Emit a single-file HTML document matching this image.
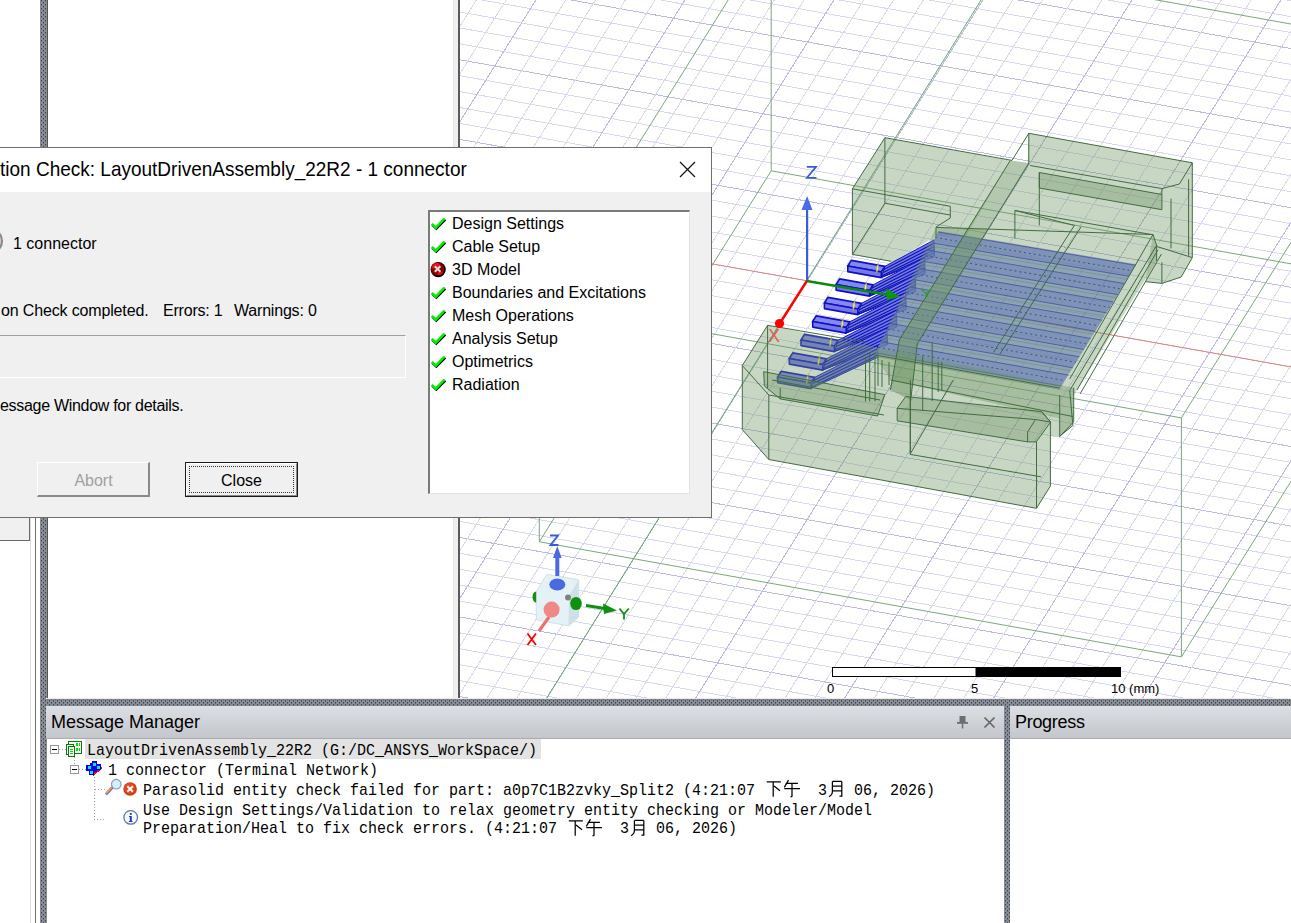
<!DOCTYPE html>
<html><head><meta charset="utf-8">
<style>
html,body{margin:0;padding:0;width:1291px;height:923px;overflow:hidden;background:#fff;position:relative;font-family:"Liberation Sans",sans-serif;}
.abs{position:absolute;}
.splv{position:absolute;background-color:#8e8e8e;background-image:radial-gradient(circle at 1px 1px, #234478 0.6px, transparent 1.1px),radial-gradient(circle at 3px 3px, #234478 0.6px, transparent 1.1px);background-size:4px 4px;}
.t{position:absolute;white-space:pre;line-height:1;}
.mono{font-family:"Liberation Mono",monospace;transform:scaleY(1.13);transform-origin:0 11.5px;}
</style></head><body>
<!-- left lines below dialog -->
<div class="abs" style="left:30px;top:517px;width:1px;height:406px;background:#dcdcdc"></div>
<div class="abs" style="left:35px;top:517px;width:1px;height:406px;background:#6e6e6e"></div>
<div class="abs" style="left:0;top:517px;width:29px;height:23px;background:#f0f0f0;border-right:1px solid #6a6a6a;border-bottom:1px solid #6a6a6a"></div>
<!-- vertical splitter left -->
<svg class="abs" style="left:0;top:0" width="1291" height="923"><defs><pattern id="dots" x="0" y="0" width="4" height="4" patternUnits="userSpaceOnUse"><rect width="4" height="4" fill="#8c8c8c"/><rect x="1" y="0" width="1" height="1" fill="#2a4676"/><rect x="1" y="1" width="1" height="1" fill="#5a6a84"/><rect x="3" y="2" width="1" height="1" fill="#2a4676"/><rect x="3" y="3" width="1" height="1" fill="#5a6a84"/></pattern></defs><g shape-rendering="crispEdges"><rect x="40" y="0" width="7" height="923" fill="url(#dots)"/><rect x="40" y="699" width="1251" height="7" fill="url(#dots)"/><rect x="1004" y="706" width="6" height="217" fill="url(#dots)"/></g></svg>
<div class="abs" style="left:47px;top:0;width:1px;height:699px;background:#555"></div>
<!-- viewport border -->
<div class="abs" style="left:453px;top:0;width:1px;height:699px;background:#e4e4e4"></div>
<div class="abs" style="left:454px;top:0;width:4px;height:699px;background:#f0f0f0"></div>
<div class="abs" style="left:458px;top:0;width:2px;height:699px;background:#5a5a5a"></div>
<!-- viewport -->
<svg class="abs" style="left:0;top:0" width="1291" height="923">
<defs><clipPath id="vp"><rect x="460" y="0" width="831" height="699"/></clipPath></defs>
<g clip-path="url(#vp)" shape-rendering="crispEdges" stroke-width="1">
<line x1="460" y1="-147.16" x2="1291" y2="0.76" stroke="#d8d8ee"/>
<line x1="460" y1="-131.24" x2="1291" y2="16.68" stroke="#d8d8ee"/>
<line x1="460" y1="-115.32" x2="1291" y2="32.60" stroke="#d8d8ee"/>
<line x1="460" y1="-99.40" x2="1291" y2="48.52" stroke="#bcbce0"/>
<line x1="460" y1="-83.48" x2="1291" y2="64.44" stroke="#d8d8ee"/>
<line x1="460" y1="-67.56" x2="1291" y2="80.36" stroke="#d8d8ee"/>
<line x1="460" y1="-51.64" x2="1291" y2="96.28" stroke="#d8d8ee"/>
<line x1="460" y1="-35.72" x2="1291" y2="112.20" stroke="#d8d8ee"/>
<line x1="460" y1="-19.80" x2="1291" y2="128.12" stroke="#bcbce0"/>
<line x1="460" y1="-3.88" x2="1291" y2="144.04" stroke="#d8d8ee"/>
<line x1="460" y1="12.04" x2="1291" y2="159.96" stroke="#d8d8ee"/>
<line x1="460" y1="27.96" x2="1291" y2="175.88" stroke="#d8d8ee"/>
<line x1="460" y1="43.88" x2="1291" y2="191.80" stroke="#d8d8ee"/>
<line x1="460" y1="59.80" x2="1291" y2="207.72" stroke="#bcbce0"/>
<line x1="460" y1="75.72" x2="1291" y2="223.64" stroke="#d8d8ee"/>
<line x1="460" y1="91.64" x2="1291" y2="239.56" stroke="#d8d8ee"/>
<line x1="460" y1="107.56" x2="1291" y2="255.48" stroke="#d8d8ee"/>
<line x1="460" y1="123.48" x2="1291" y2="271.40" stroke="#d8d8ee"/>
<line x1="460" y1="139.40" x2="1291" y2="287.32" stroke="#bcbce0"/>
<line x1="460" y1="155.32" x2="1291" y2="303.24" stroke="#d8d8ee"/>
<line x1="460" y1="171.24" x2="1291" y2="319.16" stroke="#d8d8ee"/>
<line x1="460" y1="187.16" x2="1291" y2="335.08" stroke="#d8d8ee"/>
<line x1="460" y1="203.08" x2="1291" y2="351.00" stroke="#d8d8ee"/>
<line x1="460" y1="219.00" x2="1291" y2="366.92" stroke="#bcbce0"/>
<line x1="460" y1="234.92" x2="1291" y2="382.84" stroke="#d8d8ee"/>
<line x1="460" y1="250.84" x2="1291" y2="398.76" stroke="#d8d8ee"/>
<line x1="460" y1="266.76" x2="1291" y2="414.68" stroke="#d8d8ee"/>
<line x1="460" y1="282.68" x2="1291" y2="430.60" stroke="#d8d8ee"/>
<line x1="460" y1="298.60" x2="1291" y2="446.52" stroke="#bcbce0"/>
<line x1="460" y1="314.52" x2="1291" y2="462.44" stroke="#d8d8ee"/>
<line x1="460" y1="330.44" x2="1291" y2="478.36" stroke="#d8d8ee"/>
<line x1="460" y1="346.36" x2="1291" y2="494.28" stroke="#d8d8ee"/>
<line x1="460" y1="362.28" x2="1291" y2="510.20" stroke="#d8d8ee"/>
<line x1="460" y1="378.20" x2="1291" y2="526.12" stroke="#bcbce0"/>
<line x1="460" y1="394.12" x2="1291" y2="542.04" stroke="#d8d8ee"/>
<line x1="460" y1="410.04" x2="1291" y2="557.96" stroke="#d8d8ee"/>
<line x1="460" y1="425.96" x2="1291" y2="573.88" stroke="#d8d8ee"/>
<line x1="460" y1="441.88" x2="1291" y2="589.80" stroke="#d8d8ee"/>
<line x1="460" y1="457.80" x2="1291" y2="605.72" stroke="#bcbce0"/>
<line x1="460" y1="473.72" x2="1291" y2="621.64" stroke="#d8d8ee"/>
<line x1="460" y1="489.64" x2="1291" y2="637.56" stroke="#d8d8ee"/>
<line x1="460" y1="505.56" x2="1291" y2="653.48" stroke="#d8d8ee"/>
<line x1="460" y1="521.48" x2="1291" y2="669.40" stroke="#d8d8ee"/>
<line x1="460" y1="537.40" x2="1291" y2="685.32" stroke="#bcbce0"/>
<line x1="460" y1="553.32" x2="1291" y2="701.24" stroke="#d8d8ee"/>
<line x1="460" y1="569.24" x2="1291" y2="717.16" stroke="#d8d8ee"/>
<line x1="460" y1="585.16" x2="1291" y2="733.08" stroke="#d8d8ee"/>
<line x1="460" y1="601.08" x2="1291" y2="749.00" stroke="#d8d8ee"/>
<line x1="460" y1="617.00" x2="1291" y2="764.92" stroke="#bcbce0"/>
<line x1="460" y1="632.92" x2="1291" y2="780.84" stroke="#d8d8ee"/>
<line x1="460" y1="648.84" x2="1291" y2="796.76" stroke="#d8d8ee"/>
<line x1="460" y1="664.76" x2="1291" y2="812.68" stroke="#d8d8ee"/>
<line x1="460" y1="680.68" x2="1291" y2="828.60" stroke="#d8d8ee"/>
<line x1="460" y1="696.60" x2="1291" y2="844.52" stroke="#bcbce0"/>
<line x1="476.30" y1="0" x2="39.42" y2="699" stroke="#d8d8ee"/>
<line x1="506.10" y1="0" x2="69.22" y2="699" stroke="#d8d8ee"/>
<line x1="535.90" y1="0" x2="99.02" y2="699" stroke="#bcbce0"/>
<line x1="565.70" y1="0" x2="128.82" y2="699" stroke="#d8d8ee"/>
<line x1="595.50" y1="0" x2="158.62" y2="699" stroke="#d8d8ee"/>
<line x1="625.30" y1="0" x2="188.42" y2="699" stroke="#d8d8ee"/>
<line x1="655.10" y1="0" x2="218.23" y2="699" stroke="#d8d8ee"/>
<line x1="684.90" y1="0" x2="248.02" y2="699" stroke="#bcbce0"/>
<line x1="714.70" y1="0" x2="277.83" y2="699" stroke="#d8d8ee"/>
<line x1="744.50" y1="0" x2="307.62" y2="699" stroke="#d8d8ee"/>
<line x1="774.30" y1="0" x2="337.42" y2="699" stroke="#d8d8ee"/>
<line x1="804.10" y1="0" x2="367.22" y2="699" stroke="#d8d8ee"/>
<line x1="833.90" y1="0" x2="397.02" y2="699" stroke="#bcbce0"/>
<line x1="863.70" y1="0" x2="426.83" y2="699" stroke="#d8d8ee"/>
<line x1="893.50" y1="0" x2="456.62" y2="699" stroke="#d8d8ee"/>
<line x1="923.30" y1="0" x2="486.42" y2="699" stroke="#d8d8ee"/>
<line x1="953.10" y1="0" x2="516.22" y2="699" stroke="#d8d8ee"/>
<line x1="982.90" y1="0" x2="546.02" y2="699" stroke="#bcbce0"/>
<line x1="1012.70" y1="0" x2="575.83" y2="699" stroke="#d8d8ee"/>
<line x1="1042.50" y1="0" x2="605.62" y2="699" stroke="#d8d8ee"/>
<line x1="1072.30" y1="0" x2="635.42" y2="699" stroke="#d8d8ee"/>
<line x1="1102.10" y1="0" x2="665.22" y2="699" stroke="#d8d8ee"/>
<line x1="1131.90" y1="0" x2="695.03" y2="699" stroke="#bcbce0"/>
<line x1="1161.70" y1="0" x2="724.83" y2="699" stroke="#d8d8ee"/>
<line x1="1191.50" y1="0" x2="754.62" y2="699" stroke="#d8d8ee"/>
<line x1="1221.30" y1="0" x2="784.42" y2="699" stroke="#d8d8ee"/>
<line x1="1251.10" y1="0" x2="814.22" y2="699" stroke="#d8d8ee"/>
<line x1="1280.90" y1="0" x2="844.03" y2="699" stroke="#bcbce0"/>
<line x1="1310.70" y1="0" x2="873.83" y2="699" stroke="#d8d8ee"/>
<line x1="1340.50" y1="0" x2="903.62" y2="699" stroke="#d8d8ee"/>
<line x1="1370.30" y1="0" x2="933.42" y2="699" stroke="#d8d8ee"/>
<line x1="1400.10" y1="0" x2="963.22" y2="699" stroke="#d8d8ee"/>
<line x1="1429.90" y1="0" x2="993.03" y2="699" stroke="#bcbce0"/>
<line x1="1459.70" y1="0" x2="1022.83" y2="699" stroke="#d8d8ee"/>
<line x1="1489.50" y1="0" x2="1052.62" y2="699" stroke="#d8d8ee"/>
<line x1="1519.30" y1="0" x2="1082.42" y2="699" stroke="#d8d8ee"/>
<line x1="1549.10" y1="0" x2="1112.22" y2="699" stroke="#d8d8ee"/>
<line x1="1578.90" y1="0" x2="1142.03" y2="699" stroke="#bcbce0"/>
<line x1="1608.70" y1="0" x2="1171.82" y2="699" stroke="#d8d8ee"/>
<line x1="1638.50" y1="0" x2="1201.62" y2="699" stroke="#d8d8ee"/>
<line x1="1668.30" y1="0" x2="1231.43" y2="699" stroke="#d8d8ee"/>
<line x1="1698.10" y1="0" x2="1261.22" y2="699" stroke="#d8d8ee"/>
<line x1="1727.90" y1="0" x2="1291.03" y2="699" stroke="#bcbce0"/>
</g>
<g clip-path="url(#vp)">
<polyline points="539.3,541.8 1181.4,656.9" fill="none" stroke="#7aa87a" stroke-width="1" />
<polyline points="539.3,541.8 771.2,170.8" fill="none" stroke="#7aa87a" stroke-width="1" />
<polyline points="771.2,170.8 1371.2,278.2" fill="none" stroke="#7aa87a" stroke-width="1" />
<polyline points="1181.4,656.9 1431.0,256.9" fill="none" stroke="#7aa87a" stroke-width="1" />
<polyline points="539.3,302.8 1181.4,417.9" fill="none" stroke="#7aa87a" stroke-width="1" />
<polyline points="539.3,302.8 771.2,-69.0" fill="none" stroke="#7aa87a" stroke-width="1" />
<polyline points="1181.4,417.9 1431.0,17.9" fill="none" stroke="#7aa87a" stroke-width="1" />
<polyline points="771.2,-69.0 1471.2,56.3" fill="none" stroke="#7aa87a" stroke-width="1" />
<polyline points="539.3,541.8 539.3,302.8" fill="none" stroke="#7aa87a" stroke-width="1" />
<polyline points="1181.4,656.9 1181.4,417.9" fill="none" stroke="#7aa87a" stroke-width="1" />
<polyline points="771.2,170.8 771.2,-69.0" fill="none" stroke="#7aa87a" stroke-width="1" />
<polyline points="460.0,219.0 1291.0,366.9" fill="none" stroke="#e08a80" stroke-width="1" />
<polyline points="981.1,0.0 546.3,699.0" fill="none" stroke="#6aa86a" stroke-width="1" />
<polygon points="884.9,137.7 1010.3,160.4 966.0,236.0 936.0,236.5 893.0,262.0 852.4,254.4 852.4,188.8" fill="rgba(110,150,100,0.38)" stroke="none" stroke-width="1" />
<polygon points="1028.8,133.3 1192.3,162.8 1192.3,257.6 1181.2,277.0 1161.9,283.4 1145.3,281.6 1153.0,234.5 988.8,229.0 1027.7,163.0" fill="rgba(110,150,100,0.38)" stroke="none" stroke-width="1" />
<polygon points="1039.3,172.5 1161.9,194.5 1161.9,209.7 1039.3,188.0" fill="rgba(110,150,100,0.38)" stroke="none" stroke-width="1" />
<polygon points="884.8,266.4 934.0,240.0 934.5,256.5 881.3,277.6" fill="#7478ea" stroke="#1010c0" stroke-width="1" />
<polyline points="883.8,269.6 934.1,243.2" fill="none" stroke="#0a12a8" stroke-width="1.1" />
<polyline points="882.8,272.8 934.2,246.4" fill="none" stroke="#0a12a8" stroke-width="1.1" />
<polyline points="881.8,276.0 934.3,249.6" fill="none" stroke="#0a12a8" stroke-width="1.1" />
<polyline points="881.3,277.6 934.4,252.8" fill="none" stroke="#0a12a8" stroke-width="1.1" />
<polygon points="873.1,284.9 924.6,257.6 925.1,274.1 869.6,296.1" fill="#7478ea" stroke="#1010c0" stroke-width="1" />
<polyline points="872.1,288.1 924.7,260.8" fill="none" stroke="#0a12a8" stroke-width="1.1" />
<polyline points="871.1,291.3 924.8,264.0" fill="none" stroke="#0a12a8" stroke-width="1.1" />
<polyline points="870.1,294.5 924.9,267.2" fill="none" stroke="#0a12a8" stroke-width="1.1" />
<polyline points="869.6,296.1 925.0,270.4" fill="none" stroke="#0a12a8" stroke-width="1.1" />
<polygon points="861.4,303.4 915.2,275.2 915.7,291.7 857.9,314.6" fill="#7478ea" stroke="#1010c0" stroke-width="1" />
<polyline points="860.4,306.6 915.3,278.4" fill="none" stroke="#0a12a8" stroke-width="1.1" />
<polyline points="859.4,309.8 915.4,281.6" fill="none" stroke="#0a12a8" stroke-width="1.1" />
<polyline points="858.4,313.0 915.5,284.8" fill="none" stroke="#0a12a8" stroke-width="1.1" />
<polyline points="857.9,314.6 915.6,288.0" fill="none" stroke="#0a12a8" stroke-width="1.1" />
<polygon points="849.7,321.9 905.8,292.8 906.3,309.3 846.2,333.1" fill="#7478ea" stroke="#1010c0" stroke-width="1" />
<polyline points="848.7,325.1 905.9,296.0" fill="none" stroke="#0a12a8" stroke-width="1.1" />
<polyline points="847.7,328.3 906.0,299.2" fill="none" stroke="#0a12a8" stroke-width="1.1" />
<polyline points="846.7,331.5 906.1,302.4" fill="none" stroke="#0a12a8" stroke-width="1.1" />
<polyline points="846.2,333.1 906.2,305.6" fill="none" stroke="#0a12a8" stroke-width="1.1" />
<polygon points="838.0,340.4 896.4,310.4 896.9,326.9 834.5,351.6" fill="#7478ea" stroke="#1010c0" stroke-width="1" />
<polyline points="837.0,343.6 896.5,313.6" fill="none" stroke="#0a12a8" stroke-width="1.1" />
<polyline points="836.0,346.8 896.6,316.8" fill="none" stroke="#0a12a8" stroke-width="1.1" />
<polyline points="835.0,350.0 896.7,320.0" fill="none" stroke="#0a12a8" stroke-width="1.1" />
<polyline points="834.5,351.6 896.8,323.2" fill="none" stroke="#0a12a8" stroke-width="1.1" />
<polygon points="826.3,358.9 887.0,328.0 887.5,344.5 822.8,370.1" fill="#7478ea" stroke="#1010c0" stroke-width="1" />
<polyline points="825.3,362.1 887.1,331.2" fill="none" stroke="#0a12a8" stroke-width="1.1" />
<polyline points="824.3,365.3 887.2,334.4" fill="none" stroke="#0a12a8" stroke-width="1.1" />
<polyline points="823.3,368.5 887.3,337.6" fill="none" stroke="#0a12a8" stroke-width="1.1" />
<polyline points="822.8,370.1 887.4,340.8" fill="none" stroke="#0a12a8" stroke-width="1.1" />
<polygon points="814.6,377.4 877.6,345.6 878.1,357.1 811.1,388.6" fill="#7478ea" stroke="#1010c0" stroke-width="1" />
<polyline points="813.6,380.6 877.7,348.8" fill="none" stroke="#0a12a8" stroke-width="1.1" />
<polyline points="812.6,383.8 877.9,352.0" fill="none" stroke="#0a12a8" stroke-width="1.1" />
<polyline points="811.6,387.0 878.0,355.2" fill="none" stroke="#0a12a8" stroke-width="1.1" />
<polygon points="851.3,260.4 884.8,266.4 881.3,272.0 847.8,266.0" fill="#8488f2" stroke="#1010c0" stroke-width="1.6" stroke-linejoin="round"/>
<polygon points="847.8,266.0 881.3,272.0 881.3,277.6 847.8,271.6" fill="#7478ea" stroke="#1010c0" stroke-width="1.6" stroke-linejoin="round"/>
<path d="M878.3 263.4 l-2 4 v6 l2 -4 z" fill="#f0f0a0" stroke="#a0a040" stroke-width="0.6"/>
<polygon points="839.6,278.9 873.1,284.9 869.6,290.5 836.1,284.5" fill="#8488f2" stroke="#1010c0" stroke-width="1.6" stroke-linejoin="round"/>
<polygon points="836.1,284.5 869.6,290.5 869.6,296.1 836.1,290.1" fill="#7478ea" stroke="#1010c0" stroke-width="1.6" stroke-linejoin="round"/>
<path d="M866.6 281.9 l-2 4 v6 l2 -4 z" fill="#f0f0a0" stroke="#a0a040" stroke-width="0.6"/>
<polygon points="827.9,297.4 861.4,303.4 857.9,309.0 824.4,303.0" fill="#8488f2" stroke="#1010c0" stroke-width="1.6" stroke-linejoin="round"/>
<polygon points="824.4,303.0 857.9,309.0 857.9,314.6 824.4,308.6" fill="#7478ea" stroke="#1010c0" stroke-width="1.6" stroke-linejoin="round"/>
<path d="M854.9 300.4 l-2 4 v6 l2 -4 z" fill="#f0f0a0" stroke="#a0a040" stroke-width="0.6"/>
<polygon points="816.2,315.9 849.7,321.9 846.2,327.5 812.7,321.5" fill="#8488f2" stroke="#1010c0" stroke-width="1.6" stroke-linejoin="round"/>
<polygon points="812.7,321.5 846.2,327.5 846.2,333.1 812.7,327.1" fill="#7478ea" stroke="#1010c0" stroke-width="1.6" stroke-linejoin="round"/>
<path d="M843.2 318.9 l-2 4 v6 l2 -4 z" fill="#f0f0a0" stroke="#a0a040" stroke-width="0.6"/>
<polygon points="804.5,334.4 838.0,340.4 834.5,346.0 801.0,340.0" fill="#8488f2" stroke="#1010c0" stroke-width="1.6" stroke-linejoin="round"/>
<polygon points="801.0,340.0 834.5,346.0 834.5,351.6 801.0,345.6" fill="#7478ea" stroke="#1010c0" stroke-width="1.6" stroke-linejoin="round"/>
<path d="M831.5 337.4 l-2 4 v6 l2 -4 z" fill="#f0f0a0" stroke="#a0a040" stroke-width="0.6"/>
<polygon points="792.8,352.9 826.3,358.9 822.8,364.5 789.3,358.5" fill="#8488f2" stroke="#1010c0" stroke-width="1.6" stroke-linejoin="round"/>
<polygon points="789.3,358.5 822.8,364.5 822.8,370.1 789.3,364.1" fill="#7478ea" stroke="#1010c0" stroke-width="1.6" stroke-linejoin="round"/>
<path d="M819.8 355.9 l-2 4 v6 l2 -4 z" fill="#f0f0a0" stroke="#a0a040" stroke-width="0.6"/>
<polygon points="781.1,371.4 814.6,377.4 811.1,383.0 777.6,377.0" fill="#8488f2" stroke="#1010c0" stroke-width="1.6" stroke-linejoin="round"/>
<polygon points="777.6,377.0 811.1,383.0 811.1,388.6 777.6,382.6" fill="#7478ea" stroke="#1010c0" stroke-width="1.6" stroke-linejoin="round"/>
<path d="M808.1 374.4 l-2 4 v6 l2 -4 z" fill="#f0f0a0" stroke="#a0a040" stroke-width="0.6"/>
<polygon points="938.6,231.0 1136.4,264.3 1060.1,388.2 874.3,354.9" fill="rgba(95,110,215,0.58)" stroke="none" stroke-width="1" />
<polygon points="938.1,232.0 1135.8,265.3 1129.0,276.3 932.4,243.0" fill="rgba(100,110,240,0.4)" stroke="none" stroke-width="1" />
<polyline points="938.1,232.0 1135.8,265.3" fill="none" stroke="#3038c0" stroke-width="0.9" />
<polyline points="932.4,243.0 1129.0,276.3" fill="none" stroke="#3038c0" stroke-width="0.9" />
<polyline points="935.2,237.5 1132.4,270.8" fill="none" stroke="#1820a0" stroke-width="0.9" stroke-dasharray="2,3"/>
<polyline points="930.8,246.0 1127.2,279.3" fill="none" stroke="rgba(90,130,90,0.45)" stroke-width="1.0" />
<polygon points="928.6,250.3 1124.5,283.6 1117.7,294.6 922.9,261.3" fill="rgba(100,110,240,0.4)" stroke="none" stroke-width="1" />
<polyline points="928.6,250.3 1124.5,283.6" fill="none" stroke="#3038c0" stroke-width="0.9" />
<polyline points="922.9,261.3 1117.7,294.6" fill="none" stroke="#3038c0" stroke-width="0.9" />
<polyline points="925.7,255.8 1121.1,289.1" fill="none" stroke="#1820a0" stroke-width="0.9" stroke-dasharray="2,3"/>
<polyline points="921.3,264.3 1115.9,297.6" fill="none" stroke="rgba(90,130,90,0.45)" stroke-width="1.0" />
<polygon points="919.1,268.6 1113.2,301.9 1106.5,312.9 913.4,279.6" fill="rgba(100,110,240,0.4)" stroke="none" stroke-width="1" />
<polyline points="919.1,268.6 1113.2,301.9" fill="none" stroke="#3038c0" stroke-width="0.9" />
<polyline points="913.4,279.6 1106.5,312.9" fill="none" stroke="#3038c0" stroke-width="0.9" />
<polyline points="916.2,274.1 1109.9,307.4" fill="none" stroke="#1820a0" stroke-width="0.9" stroke-dasharray="2,3"/>
<polyline points="911.8,282.6 1104.6,315.9" fill="none" stroke="rgba(90,130,90,0.45)" stroke-width="1.0" />
<polygon points="909.6,286.9 1102.0,320.2 1095.2,331.2 903.9,297.9" fill="rgba(100,110,240,0.4)" stroke="none" stroke-width="1" />
<polyline points="909.6,286.9 1102.0,320.2" fill="none" stroke="#3038c0" stroke-width="0.9" />
<polyline points="903.9,297.9 1095.2,331.2" fill="none" stroke="#3038c0" stroke-width="0.9" />
<polyline points="906.7,292.4 1098.6,325.7" fill="none" stroke="#1820a0" stroke-width="0.9" stroke-dasharray="2,3"/>
<polyline points="902.3,300.9 1093.4,334.2" fill="none" stroke="rgba(90,130,90,0.45)" stroke-width="1.0" />
<polygon points="900.1,305.2 1090.7,338.5 1083.9,349.5 894.4,316.2" fill="rgba(100,110,240,0.4)" stroke="none" stroke-width="1" />
<polyline points="900.1,305.2 1090.7,338.5" fill="none" stroke="#3038c0" stroke-width="0.9" />
<polyline points="894.4,316.2 1083.9,349.5" fill="none" stroke="#3038c0" stroke-width="0.9" />
<polyline points="897.2,310.7 1087.3,344.0" fill="none" stroke="#1820a0" stroke-width="0.9" stroke-dasharray="2,3"/>
<polyline points="892.8,319.2 1082.1,352.5" fill="none" stroke="rgba(90,130,90,0.45)" stroke-width="1.0" />
<polygon points="890.6,323.5 1079.4,356.8 1072.7,367.8 884.9,334.5" fill="rgba(100,110,240,0.4)" stroke="none" stroke-width="1" />
<polyline points="890.6,323.5 1079.4,356.8" fill="none" stroke="#3038c0" stroke-width="0.9" />
<polyline points="884.9,334.5 1072.7,367.8" fill="none" stroke="#3038c0" stroke-width="0.9" />
<polyline points="887.7,329.0 1076.0,362.3" fill="none" stroke="#1820a0" stroke-width="0.9" stroke-dasharray="2,3"/>
<polyline points="883.3,337.5 1070.8,370.8" fill="none" stroke="rgba(90,130,90,0.45)" stroke-width="1.0" />
<polygon points="881.1,341.8 1068.2,375.1 1061.4,386.1 875.4,352.8" fill="rgba(100,110,240,0.4)" stroke="none" stroke-width="1" />
<polyline points="881.1,341.8 1068.2,375.1" fill="none" stroke="#3038c0" stroke-width="0.9" />
<polyline points="875.4,352.8 1061.4,386.1" fill="none" stroke="#3038c0" stroke-width="0.9" />
<polyline points="878.2,347.3 1064.8,380.6" fill="none" stroke="#1820a0" stroke-width="0.9" stroke-dasharray="2,3"/>
<polyline points="873.8,355.8 1059.5,389.1" fill="none" stroke="rgba(90,130,90,0.45)" stroke-width="1.0" />
<polygon points="936.2,227.4 1153.0,234.5 1156.6,245.3 1156.6,261.0 1072.9,396.9 1072.9,425.5 1059.8,436.2 1059.8,418.5 890.5,380.0 874.3,354.9" fill="rgba(110,150,100,0.38)" stroke="none" stroke-width="1" />
<polygon points="767.6,325.3 1073.7,387.7 1073.7,421.8 1059.7,436.5 1050.4,436.0 1050.4,486.1 1036.5,508.3 768.8,459.5 742.3,429.6 742.3,365.5" fill="rgba(110,150,100,0.38)" stroke="none" stroke-width="1" />
<polygon points="763.7,371.7 884.8,394.6 877.6,416.0 780.2,398.9 764.4,386.0" fill="rgba(110,150,100,0.38)" stroke="none" stroke-width="1" />
<polygon points="905.8,396.5 1041.4,411.6 1050.7,422.1 1036.2,441.9 1027.6,441.9 897.2,420.8 897.2,408.3" fill="rgba(110,150,100,0.38)" stroke="none" stroke-width="1" />
<polygon points="1010.3,160.4 1029.0,163.0 917.4,343.6 910.7,400.0 890.4,390.0 899.3,340.0" fill="rgba(110,150,100,0.52)" stroke="none" stroke-width="1" />
<polyline points="852.4,188.8 884.9,137.7 1012.0,160.4" fill="none" stroke="#416c41" stroke-width="1" />
<polyline points="852.4,188.8 852.4,254.4 891.0,261.3" fill="none" stroke="#416c41" stroke-width="1" />
<polyline points="852.4,188.8 950.3,206.3 950.3,218.0 936.0,227.2 936.0,236.5" fill="none" stroke="#416c41" stroke-width="1" />
<polyline points="884.9,137.7 884.9,203.2 852.4,254.4" fill="none" stroke="#416c41" stroke-width="1" />
<polyline points="884.9,203.2 950.0,215.0" fill="none" stroke="#416c41" stroke-width="1" />
<polyline points="1028.8,133.3 1192.3,162.8 1192.3,257.6 1181.2,277.0 1161.9,283.4 1145.3,281.6" fill="none" stroke="#416c41" stroke-width="1" />
<polyline points="1028.8,133.3 1028.8,163.0" fill="none" stroke="#416c41" stroke-width="1" />
<polyline points="1030.1,165.5 1161.9,188.6 1179.4,184.0 1192.3,162.8" fill="none" stroke="#416c41" stroke-width="1" />
<polyline points="1161.9,188.6 1161.9,209.7 1039.3,188.0 1039.3,172.5 1161.9,194.5" fill="none" stroke="#416c41" stroke-width="1" />
<polyline points="1171.0,198.7 1171.0,248.4" fill="none" stroke="#416c41" stroke-width="1" />
<polyline points="1039.3,172.5 1039.3,225.4" fill="none" stroke="#416c41" stroke-width="1" />
<polyline points="1188.6,179.3 1188.6,255.8" fill="none" stroke="#416c41" stroke-width="1" />
<polyline points="1157.3,246.6 1192.3,257.6" fill="none" stroke="#416c41" stroke-width="1" />
<polyline points="1161.9,262.3 1161.9,283.4" fill="none" stroke="#416c41" stroke-width="1" />
<polyline points="1010.3,160.4 899.3,340.0 890.4,390.0" fill="none" stroke="#416c41" stroke-width="1" />
<polyline points="1029.0,163.0 917.4,343.6 910.7,400.0" fill="none" stroke="#416c41" stroke-width="1" />
<polyline points="1012.0,160.4 1028.8,133.3" fill="none" stroke="#416c41" stroke-width="1" />
<polyline points="936.2,227.4 1153.0,234.5 1156.6,245.3 1069.7,390.6 1072.9,425.5 1059.8,436.2" fill="none" stroke="#416c41" stroke-width="1" />
<polyline points="1153.0,234.5 1069.7,379.0" fill="none" stroke="#416c41" stroke-width="1" />
<polyline points="1156.6,245.3 1156.6,261.0" fill="none" stroke="#416c41" stroke-width="1" />
<polyline points="890.5,380.0 1072.9,416.5" fill="none" stroke="#416c41" stroke-width="1" />
<polyline points="767.6,325.3 742.3,365.5 742.3,429.6 768.8,459.5 1036.5,508.3 1050.4,486.1 1050.4,421.8 1041.9,411.8" fill="none" stroke="#416c41" stroke-width="1" />
<polyline points="742.3,365.5 768.8,395.0 768.8,459.5" fill="none" stroke="#416c41" stroke-width="1" />
<polyline points="767.6,325.3 767.6,388.0" fill="none" stroke="#416c41" stroke-width="1" />
<polyline points="768.8,395.0 884.0,415.0" fill="none" stroke="#416c41" stroke-width="1" />
<polyline points="767.6,325.3 865.9,342.1" fill="none" stroke="#416c41" stroke-width="1" />
<polyline points="1036.5,508.3 1036.5,442.0" fill="none" stroke="#416c41" stroke-width="1" />
<polyline points="910.2,397.0 910.2,454.4 1041.0,476.8" fill="none" stroke="#416c41" stroke-width="1" />
<polyline points="763.7,371.7 884.8,394.6 877.6,416.0 780.2,398.9 764.4,386.0 763.7,371.7" fill="none" stroke="#416c41" stroke-width="1" />
<polyline points="772.0,380.0 880.0,400.0" fill="none" stroke="#416c41" stroke-width="1" />
<polyline points="780.2,398.9 780.2,388.0" fill="none" stroke="#416c41" stroke-width="1" />
<polyline points="905.8,396.5 1041.4,411.6 1050.7,422.1 1036.2,441.9 1027.6,441.9 897.2,420.8 897.2,408.3 905.8,396.5" fill="none" stroke="#416c41" stroke-width="1" />
<polyline points="897.2,408.3 1035.5,419.5 1050.7,422.1" fill="none" stroke="#416c41" stroke-width="1" />
<polyline points="1035.5,419.5 1027.6,432.0 1027.6,441.9" fill="none" stroke="#416c41" stroke-width="1" />
<polyline points="910.4,380.0 910.4,453.7 953.2,380.0" fill="none" stroke="#416c41" stroke-width="1" />
<polyline points="1059.7,436.5 1073.7,421.8 1073.7,387.7" fill="none" stroke="#416c41" stroke-width="1" />
<polyline points="874.3,354.9 1060.1,388.2" fill="none" stroke="#416c41" stroke-width="1" />
<polyline points="1158.0,249.7 1077.0,390.0" fill="none" stroke="#416c41" stroke-width="1" />
<polyline points="1161.5,254.0 1080.0,394.0" fill="none" stroke="#416c41" stroke-width="1" />
<polyline points="865.5,357.0 865.5,401.5" fill="none" stroke="#416c41" stroke-width="1" />
<polyline points="869.7,352.0 869.7,401.5" fill="none" stroke="#416c41" stroke-width="1" />
<polyline points="875.0,357.4 875.0,401.5" fill="none" stroke="#416c41" stroke-width="1" />
<polyline points="878.0,357.4 878.0,386.0" fill="none" stroke="#416c41" stroke-width="1" />
<polyline points="882.0,360.0 882.0,387.0" fill="none" stroke="#416c41" stroke-width="1" />
<polyline points="889.0,362.0 889.0,385.0" fill="none" stroke="#416c41" stroke-width="1" />
<polyline points="922.7,356.0 922.7,411.0" fill="none" stroke="#416c41" stroke-width="1" />
<polyline points="932.2,342.0 932.2,401.0" fill="none" stroke="#416c41" stroke-width="1" />
<polyline points="938.2,362.0 938.2,392.0" fill="none" stroke="#416c41" stroke-width="1" />
<polyline points="941.8,362.0 941.8,390.0" fill="none" stroke="#416c41" stroke-width="1" />
<polyline points="1059.7,395.0 1059.7,436.5" fill="none" stroke="#416c41" stroke-width="1" />
<polyline points="1014.9,210.5 1074.4,225.4 993.4,352.5" fill="none" stroke="#416c41" stroke-width="1" />
<polyline points="1081.0,227.0 1000.0,354.0" fill="none" stroke="#416c41" stroke-width="1" />
<polyline points="1014.9,210.5 1014.9,238.4" fill="none" stroke="#416c41" stroke-width="1" />
<polyline points="1014.9,210.5 1152.4,234.7" fill="none" stroke="#416c41" stroke-width="1" />
<text x="768.3" y="342.3" font-family="Liberation Sans" font-size="17.5" fill="#e0604f">X</text>
<path d="M921.5 289.5 L926 293.5 L930.5 289.5 M926 293.5 V297.5" stroke="#30a030" stroke-width="1.5" fill="none"/>
<line x1="807.1" y1="281" x2="807.1" y2="209" stroke="#3a5ae0" stroke-width="2.2"/>
<polygon points="807.1,196 801.5,210 812.5,210" fill="#4a6ae8"/>
<path d="M806.8 166.8 H816 L807 177.8 H816.5" stroke="#3a5ad8" stroke-width="1.8" fill="none"/>
<line x1="806.8" y1="281" x2="889" y2="295" stroke="#0a8a0a" stroke-width="2.4"/>
<polygon points="900,296.8 886,288.5 887,300" fill="#0a9a0a"/>
<line x1="806.8" y1="281" x2="780" y2="323" stroke="#f00" stroke-width="2.4"/>
<circle cx="779.5" cy="323.5" r="4.6" fill="#f00"/>
<polygon points="546.8,574.4 578.7,579.8 578.7,617.1 568.5,625.9 536.4,619.8 536,592" fill="#e4f2f6" stroke="#c8dce2" stroke-width="0.8"/>
<polygon points="569.2,595.4 578.7,579.8 578.7,617.1 568.5,625.9" fill="#cfe0e6"/>
<ellipse cx="557.3" cy="584.6" rx="8" ry="6" fill="#4a6ae0"/>
<line x1="557.3" y1="576" x2="557.3" y2="553" stroke="#4a6ae0" stroke-width="4"/>
<polygon points="557.3,546 553,558 561.6,558" fill="#4a6ae0"/>
<path d="M550 535.5 H558 L550.5 545 H558.5" stroke="#3a5ad8" stroke-width="1.8" fill="none"/>
<path d="M536.2 591.5 A3.6 5.4 0 0 0 536.2 602.5 Z" fill="#109010"/>
<ellipse cx="576" cy="603.5" rx="5.8" ry="6.6" fill="#109010"/>
<circle cx="568" cy="597.5" r="3" fill="#808080"/>
<circle cx="551.6" cy="609.6" r="8" fill="#f08888"/>
<line x1="549" y1="617" x2="539" y2="631" stroke="#f07070" stroke-width="3.2"/>
<path d="M527.5 633.5 L536 645 M536 633.5 L527.5 645" stroke="#f00" stroke-width="1.8"/>
<line x1="586" y1="605.5" x2="608" y2="609" stroke="#109010" stroke-width="3"/>
<polygon points="617,610.5 603,603.5 604,614" fill="#109010"/>
<path d="M619.5 608.5 L624 614 L628.8 608.5 M624 614 V619.5" stroke="#109010" stroke-width="1.8" fill="none"/>
<rect x="832.5" y="667.5" width="143.5" height="9" fill="#fff" stroke="#000" stroke-width="1"/>
<rect x="976" y="667" width="145" height="10" fill="#000"/>
<text x="827" y="692.5" font-family="Liberation Sans" font-size="13" fill="#000">0</text>
<text x="971" y="692.5" font-family="Liberation Sans" font-size="13" fill="#000">5</text>
<text x="1111" y="692.5" font-family="Liberation Sans" font-size="13" fill="#000">10 (mm)</text>
</g>
</svg>
<!-- horizontal splitter -->
<div class="abs" style="left:46px;top:698px;width:1245px;height:1px;background:#ececec"></div>

<!-- message manager header -->
<div class="abs" style="left:46px;top:706px;width:958px;height:32px;background:linear-gradient(#dcdfe3,#c3c6cb);border-bottom:1px solid #a9abae"></div>
<div class="t" style="left:51px;top:713px;font-size:18px;color:#000">Message Manager</div>

<div class="abs" style="left:1010px;top:706px;width:281px;height:32px;background:linear-gradient(#dcdfe3,#c3c6cb);border-bottom:1px solid #a9abae"></div>
<svg class="abs" style="left:950px;top:710px" width="52" height="24"><g fill="#6e6e6e"><rect x="9.5" y="6" width="6" height="6.5"/><rect x="7" y="12" width="11" height="1.8"/><rect x="11.8" y="13.5" width="1.5" height="5"/></g><path d="M34.5 7.5 L44.5 17.5 M44.5 7.5 L34.5 17.5" stroke="#666" stroke-width="1.7"/></svg>
<div class="t" style="left:1015px;top:713px;font-size:18px;color:#000;letter-spacing:-0.3px">Progress</div>

<div class="abs" style="left:85px;top:739px;width:456px;height:20px;background:#e3e3e3"></div>
<div class="t mono" style="left:87px;top:744px;font-size:15px;color:#000">LayoutDrivenAssembly_22R2 (G:/DC_ANSYS_WorkSpace/)</div>
<div class="t mono" style="left:108px;top:764px;font-size:15px;color:#000">1 connector (Terminal Network)</div>
<div class="t mono" style="left:143px;top:784px;font-size:15px;color:#000">Parasolid entity check failed for part: a0p7C1B2zvky_Split2 (4:21:07 </div>
<div class="t mono" style="left:818px;top:784px;font-size:15px;color:#000">3</div>
<div class="t mono" style="left:845px;top:784px;font-size:15px;color:#000"> 06, 2026)</div>
<div class="t mono" style="left:143px;top:804px;font-size:15px;color:#000">Use Design Settings/Validation to relax geometry entity checking or Modeler/Model</div>
<div class="t mono" style="left:143px;top:822px;font-size:15px;color:#000">Preparation/Heal to fix check errors. (4:21:07 </div>
<div class="t mono" style="left:620px;top:822px;font-size:15px;color:#000">3</div>
<div class="t mono" style="left:647px;top:822px;font-size:15px;color:#000"> 06, 2026)</div>

<svg class="abs" style="left:764px;top:778px" width="90" height="22"><g stroke="#000" stroke-width="1.25" fill="none">
<path d="M2.8 3.8 H16.9 M9.2 3.8 V18.7 M10 8 L16 12.8"/>
<path d="M24.5 2.1 L20.3 9.4 M21.6 5.3 H33.9 M20.3 10.7 H36 M28 5.3 V18.3 L26.5 19"/>
<path d="M68.4 3.4 V13.6 Q68.4 17 65 18.7 M77.8 3.4 V18.2 L75.5 18.2 M68.4 3.4 H77.8 M68.4 8.1 H77.8 M68.4 12.8 H77.8"/>
</g></svg>
<svg class="abs" style="left:566px;top:816.5px" width="90" height="22"><g stroke="#000" stroke-width="1.25" fill="none">
<path d="M2.8 3.8 H16.9 M9.2 3.8 V18.7 M10 8 L16 12.8"/>
<path d="M24.5 2.1 L20.3 9.4 M21.6 5.3 H33.9 M20.3 10.7 H36 M28 5.3 V18.3 L26.5 19"/>
<path d="M68.4 3.4 V13.6 Q68.4 17 65 18.7 M77.8 3.4 V18.2 L75.5 18.2 M68.4 3.4 H77.8 M68.4 8.1 H77.8 M68.4 12.8 H77.8"/>
</g></svg>


<svg class="abs" style="left:44px;top:736px" width="100" height="92">
<g fill="none" stroke="#a0a0a0" stroke-width="1" stroke-dasharray="1,2" shape-rendering="crispEdges">
<path d="M15 13.5 H22"/><path d="M30.5 21 V28"/><path d="M35 33.5 H42"/><path d="M50.5 41 V83.5 H61"/><path d="M50.5 53.5 H61"/>
</g>
<g shape-rendering="crispEdges">
<rect x="6.5" y="9.5" width="8" height="8" fill="#fff" stroke="#999"/><path d="M8 13.5 H13" stroke="#000"/>
<rect x="26.5" y="29.5" width="8" height="8" fill="#fff" stroke="#999"/><path d="M28 33.5 H33" stroke="#000"/>
</g>
<!-- green icon -->
<g shape-rendering="crispEdges">
<rect x="24.5" y="5.5" width="13" height="12" fill="#fff" stroke="#008000" stroke-width="1"/>
<rect x="22.5" y="8.5" width="7" height="10" fill="#fff" stroke="#008000"/>
<rect x="24.5" y="10.5" width="6" height="10" fill="#fff" stroke="#008000"/>
<path d="M26 13.5 H29 M26 15.5 H29 M26 17.5 H29" stroke="#00e000"/>
<rect x="32" y="7" width="2" height="3" fill="#00e000"/><rect x="35" y="7" width="1" height="3" fill="#00e000"/>
<rect x="32" y="12" width="2" height="3" fill="#00e000"/><rect x="35" y="12" width="1" height="3" fill="#00e000"/>
</g>
<!-- blue icon -->
<g shape-rendering="crispEdges">
<path d="M47 38 L57 31 L59 32 L49 40 Z" fill="#f00"/>
<path d="M46 27 H48 V25 H53 V28 H57 V34 H53 V36 H50 V39 H45 V35 H42 V29 H46 Z" fill="#0000f0"/>
<rect x="49" y="27" width="3" height="3" fill="#00f0f0"/><rect x="44" y="30" width="3" height="3" fill="#00f0f0"/>
<rect x="53" y="30" width="3" height="3" fill="#00f0f0"/><rect x="46" y="35" width="3" height="3" fill="#00f0f0"/>
</g>
<!-- magnifier -->
<path d="M62.8 57.5 L67.8 52.1" stroke="#7a70a8" stroke-width="3" stroke-linecap="round"/>
<path d="M62.6 57 L67.4 51.8" stroke="#f0a040" stroke-width="1.6" stroke-linecap="round"/>
<circle cx="72.3" cy="48.2" r="4.8" fill="#d4eefc" stroke="#8a98c8" stroke-width="1.2"/>
<!-- red x -->
<circle cx="86.1" cy="53" r="6.8" fill="#d43a12"/>
<circle cx="85.6" cy="52.3" r="5.2" fill="#e84a20"/>
<path d="M83.3 50.3 L88.9 55.8 M88.9 50.3 L83.3 55.8" stroke="#fff" stroke-width="2"/>
<!-- info -->
<circle cx="86.7" cy="81.4" r="6.8" fill="#fbfbfb" stroke="#5a78b8" stroke-width="1.3"/>
<rect x="85.8" y="77" width="2" height="1.8" fill="#1f40a8"/>
<path d="M85 80 H87.8 V85 H88.6 V86 H84.8 V85 H85.8 V81 H85 Z" fill="#1f40a8"/>
</svg>


<!-- dialog -->
<div class="abs" style="left:-10px;top:147px;width:721px;height:369px;background:#f0f0f0;border:1px solid #6e6e6e;border-left:none"></div>
<div class="abs" style="left:0;top:148px;width:711px;height:44px;background:#fff"></div>

<div class="t" style="left:0;top:160px;font-size:19px;color:#000;transform:scaleY(1.1);transform-origin:0 16px" id="title">tion Check: LayoutDrivenAssembly_22R2 - 1 connector</div>
<svg class="abs" style="left:676px;top:158px" width="24" height="24"><path d="M4 4 L19 19 M19 4 L4 19" stroke="#111" stroke-width="1.2"/></svg>
<svg class="abs" style="left:0;top:225px" width="6" height="32"><circle cx="-10" cy="16" r="12" fill="#f3c9c9" stroke="#8a8a8a" stroke-width="2.2"/></svg>
<div class="t" id="conn" style="left:13px;top:235.5px;font-size:16px;color:#000">1 connector</div>
<div class="t" id="done" style="left:1px;top:303px;font-size:16px;color:#000;letter-spacing:-0.15px">on Check completed.</div><div class="t" style="left:163px;top:303px;font-size:16px;color:#000;letter-spacing:-0.2px">Errors: 1</div><div class="t" style="left:234px;top:303px;font-size:16px;color:#000;letter-spacing:-0.2px">Warnings: 0</div>
<div class="abs" style="left:-5px;top:335px;width:409px;height:41px;border-top:1px solid #a0a0a0;border-left:1px solid #a0a0a0;border-right:1px solid #fff;border-bottom:1px solid #fff"></div>
<div class="t" id="msgw" style="left:0;top:397.5px;font-size:16px;color:#000;letter-spacing:-0.3px">essage Window for details.</div>
<div class="abs" style="left:37px;top:462px;width:111px;height:33px;background:#f0f0f0;border-top:1px solid #fff;border-left:1px solid #fff;border-right:2px solid #8a8a8a;border-bottom:2px solid #8a8a8a;box-sizing:border-box;width:113px;height:35px"></div>
<div class="t" style="left:37px;top:473px;width:113px;text-align:center;font-size:16px;color:#a0a0a0">Abort</div>
<div class="abs" style="left:185px;top:462px;width:113px;height:35px;box-sizing:border-box;border:1px solid #1a1a1a;background:#f0f0f0"></div>
<div class="abs" style="left:186px;top:463px;width:111px;height:33px;box-sizing:border-box;border-top:1px solid #fff;border-left:1px solid #fff;border-right:1px solid #8a8a8a;border-bottom:1px solid #8a8a8a"></div>
<div class="abs" style="left:189px;top:466px;width:105px;height:27px;box-sizing:border-box;border:1px dotted #333"></div>
<div class="t" style="left:185px;top:473px;width:113px;text-align:center;font-size:16px;color:#000">Close</div>
<div class="abs" style="left:428px;top:210px;width:262px;height:284px;box-sizing:border-box;background:#fff;border-top:2px solid #7a7a7a;border-left:2px solid #7a7a7a;border-right:1px solid #e3e3e3;border-bottom:1px solid #e3e3e3"></div>
<svg class="abs" style="left:428px;top:212.0px" width="20" height="20"><path d="M4.3 12.9 L8.3 16.5 L17.2 7.5" stroke="#000" stroke-width="2.6" fill="none" stroke-linejoin="miter"/><path d="M3.7 12.1 L7.8 15.6 L16.5 6.6" stroke="#00f000" stroke-width="2.6" fill="none"/></svg>
<div class="t li" style="left:452px;top:216.0px;font-size:16px;color:#000">Design Settings</div>
<svg class="abs" style="left:428px;top:235.1px" width="20" height="20"><path d="M4.3 12.9 L8.3 16.5 L17.2 7.5" stroke="#000" stroke-width="2.6" fill="none" stroke-linejoin="miter"/><path d="M3.7 12.1 L7.8 15.6 L16.5 6.6" stroke="#00f000" stroke-width="2.6" fill="none"/></svg>
<div class="t li" style="left:452px;top:239.1px;font-size:16px;color:#000">Cable Setup</div>
<svg class="abs" style="left:429px;top:259.9px" width="18" height="18"><defs><clipPath id="rc"><circle cx="8.6" cy="9" r="6.3"/></clipPath></defs><circle cx="9.2" cy="9.6" r="7.6" fill="#000"/><circle cx="8.6" cy="9" r="6.6" fill="#8c0000"/><g clip-path="url(#rc)"><ellipse cx="6" cy="5.5" rx="5" ry="3.2" fill="#f01010"/><ellipse cx="11.5" cy="13.5" rx="3" ry="2" fill="#e01010"/></g><path d="M5.8 6.2 L11.4 11.8 M11.4 6.2 L5.8 11.8" stroke="#d4e0e0" stroke-width="2"/></svg>
<div class="t li" style="left:452px;top:262.1px;font-size:16px;color:#000">3D Model</div>
<svg class="abs" style="left:428px;top:281.1px" width="20" height="20"><path d="M4.3 12.9 L8.3 16.5 L17.2 7.5" stroke="#000" stroke-width="2.6" fill="none" stroke-linejoin="miter"/><path d="M3.7 12.1 L7.8 15.6 L16.5 6.6" stroke="#00f000" stroke-width="2.6" fill="none"/></svg>
<div class="t li" style="left:452px;top:285.1px;font-size:16px;color:#000">Boundaries and Excitations</div>
<svg class="abs" style="left:428px;top:304.2px" width="20" height="20"><path d="M4.3 12.9 L8.3 16.5 L17.2 7.5" stroke="#000" stroke-width="2.6" fill="none" stroke-linejoin="miter"/><path d="M3.7 12.1 L7.8 15.6 L16.5 6.6" stroke="#00f000" stroke-width="2.6" fill="none"/></svg>
<div class="t li" style="left:452px;top:308.2px;font-size:16px;color:#000">Mesh Operations</div>
<svg class="abs" style="left:428px;top:327.2px" width="20" height="20"><path d="M4.3 12.9 L8.3 16.5 L17.2 7.5" stroke="#000" stroke-width="2.6" fill="none" stroke-linejoin="miter"/><path d="M3.7 12.1 L7.8 15.6 L16.5 6.6" stroke="#00f000" stroke-width="2.6" fill="none"/></svg>
<div class="t li" style="left:452px;top:331.2px;font-size:16px;color:#000">Analysis Setup</div>
<svg class="abs" style="left:428px;top:350.3px" width="20" height="20"><path d="M4.3 12.9 L8.3 16.5 L17.2 7.5" stroke="#000" stroke-width="2.6" fill="none" stroke-linejoin="miter"/><path d="M3.7 12.1 L7.8 15.6 L16.5 6.6" stroke="#00f000" stroke-width="2.6" fill="none"/></svg>
<div class="t li" style="left:452px;top:354.3px;font-size:16px;color:#000">Optimetrics</div>
<svg class="abs" style="left:428px;top:373.4px" width="20" height="20"><path d="M4.3 12.9 L8.3 16.5 L17.2 7.5" stroke="#000" stroke-width="2.6" fill="none" stroke-linejoin="miter"/><path d="M3.7 12.1 L7.8 15.6 L16.5 6.6" stroke="#00f000" stroke-width="2.6" fill="none"/></svg>
<div class="t li" style="left:452px;top:377.3px;font-size:16px;color:#000">Radiation</div>

</body></html>
